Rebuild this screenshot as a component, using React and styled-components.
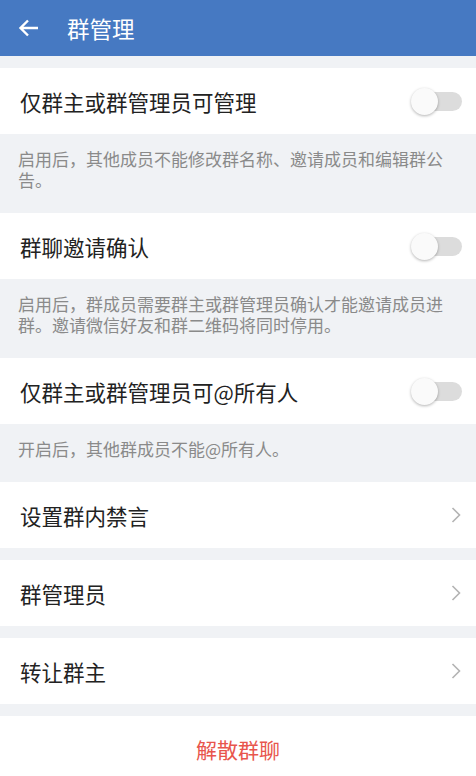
import styled, { createGlobalStyle } from "styled-components";

const GlobalStyle = createGlobalStyle`
    body {
        margin: 0;
        background: #F0F2F5;
        font-family: "Noto Sans CJK SC", "Noto Sans", sans-serif;
    }
`;

const sections = [
    { type: "switch", label: "仅群主或群管理员可管理", desc: "启用后，其他成员不能修改群名称、邀请成员和编辑群公告。" },
    { type: "switch", label: "群聊邀请确认", desc: "启用后，群成员需要群主或群管理员确认才能邀请成员进群。邀请微信好友和群二维码将同时停用。" },
    { type: "switch", label: "仅群主或群管理员可@所有人", desc: "开启后，其他群成员不能@所有人。" },
    { type: "link", label: "设置群内禁言" },
    { type: "link", label: "群管理员", gap: true },
    { type: "link", label: "转让群主", gap: true },
];

function App() {
    return (
        <Page>
            <GlobalStyle />
            <Header>
                <svg width="24" height="24" viewBox="0 0 24 24">
                    <path d="M21 12H4M11 4.5L3.5 12 11 19.5" fill="none" stroke="#FFFFFF" strokeWidth="2.4" />
                </svg>
                <Title>群管理</Title>
            </Header>
            <List>
                {sections.map((s) => (
                    <div key={s.label}>
                        <Row $gap={s.gap}>
                            <Label>{s.label}</Label>
                            {s.type === "switch" ? (
                                <Switch>
                                    <Knob />
                                </Switch>
                            ) : (
                                <svg width="12" height="18" viewBox="0 0 12 18">
                                    <path d="M2.5 2L9.5 9 2.5 16" fill="none" stroke="#B3B3B3" strokeWidth="1.6" />
                                </svg>
                            )}
                        </Row>
                        {s.desc && <Desc>{s.desc}</Desc>}
                    </div>
                ))}
                <DangerRow>解散群聊</DangerRow>
            </List>
        </Page>
    );
}

export default App

const Page = styled.div`
    width: 476px;
    height: 776px;
    overflow: hidden;
    background: #F0F2F5;
`;

const Header = styled.header`
    height: 56px;
    background: #4679C2;
    display: flex;
    align-items: center;
    padding-left: 17px;
    gap: 26px;
`;

const Title = styled.h1`
    margin: 0;
    font-size: 22.5px;
    font-weight: 400;
    color: #FFFFFF;
`;

const List = styled.div`
    padding-top: 12px;
`;

const Row = styled.div`
    height: 66px;
    background: #FFFFFF;
    display: flex;
    align-items: center;
    justify-content: space-between;
    padding: 0 14px 0 20px;
    margin-top: ${(p) => (p.$gap ? "12px" : "0")};
`;

const Label = styled.span`
    font-size: 21.5px;
    color: #222222;
`;

const Switch = styled.div`
    position: relative;
    width: 48px;
    height: 19px;
    border-radius: 10px;
    background: #DCDCDC;
`;

const Knob = styled.div`
    position: absolute;
    left: -3px;
    top: -4px;
    width: 27px;
    height: 27px;
    border-radius: 50%;
    background: #FAFAFA;
    box-shadow: 0 1px 3px rgba(0, 0, 0, 0.3);
`;

const Desc = styled.p`
    margin: 0;
    padding: 14px 18px 23px 18px;
    font-size: 17px;
    line-height: 21px;
    color: #8A8A8A;
`;

const DangerRow = styled.div`
    height: 66px;
    margin-top: 12px;
    background: #FFFFFF;
    display: flex;
    align-items: center;
    justify-content: center;
    font-size: 21px;
    color: #E8554C;
`;
